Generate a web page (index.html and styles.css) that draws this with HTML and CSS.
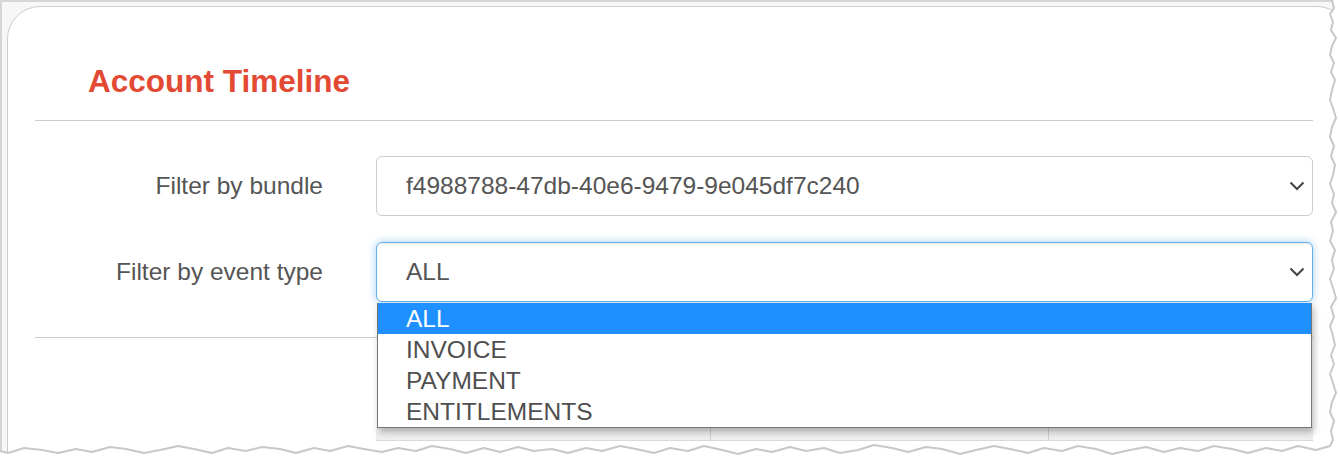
FILE: index.html
```html
<!DOCTYPE html>
<html lang="en">
<head>
<meta charset="utf-8">
<title>Account Timeline</title>
<link rel="stylesheet" href="styles.css">
</head>
<body>
<div class="screen">
  <div class="card">
    <h2 class="title">Account Timeline</h2>
    <hr class="rule">
    <div class="form">
      <div class="row">
        <label class="label">Filter by bundle</label>
        <div class="select">
          <span class="value">f4988788-47db-40e6-9479-9e045df7c240</span>
          <svg class="chev" width="16" height="10" viewBox="0 0 16 10"><polyline points="1.5,1.5 8,8 14.5,1.5" fill="none" stroke="#444" stroke-width="2"/></svg>
        </div>
      </div>
      <div class="row">
        <label class="label">Filter by event type</label>
        <div class="select focus">
          <span class="value">ALL</span>
          <svg class="chev" width="16" height="10" viewBox="0 0 16 10"><polyline points="1.5,1.5 8,8 14.5,1.5" fill="none" stroke="#444" stroke-width="2"/></svg>
          <ul class="dropdown">
            <li class="opt selected">ALL</li>
            <li class="opt">INVOICE</li>
            <li class="opt">PAYMENT</li>
            <li class="opt">ENTITLEMENTS</li>
          </ul>
        </div>
      </div>
    </div>
    <hr class="rule rule2">
    <div class="table">
      <div class="thead">
        <div class="th c1"></div>
        <div class="th c2"></div>
        <div class="th c3"></div>
      </div>
      <div class="tbody"></div>
    </div>
  </div>
</div>
<svg class="tear" width="1340" height="457" viewBox="0 0 1340 457">
  <path class="tear-fill" d="M1340,0 L1332,0 L1334,8 L1330,14 L1333,22 L1331,30 L1336,38 L1332,46 L1330,55 L1334,63 L1331,72 L1335,80 L1332,90 L1330,100 L1333,108 L1336,118 L1332,127 L1330,137 L1334,146 L1331,156 L1335,165 L1333,175 L1330,184 L1334,194 L1332,203 L1336,212 L1331,222 L1333,231 L1330,241 L1335,250 L1332,260 L1334,269 L1330,279 L1333,288 L1336,298 L1331,307 L1334,317 L1330,326 L1333,336 L1335,345 L1331,355 L1334,364 L1330,374 L1333,383 L1336,393 L1332,402 L1330,412 L1334,421 L1331,431 L1333,440 L1330,446 L1316,450 L1298,446 L1282,451 L1266,448 L1248,453 L1232,449 L1214,446 L1198,451 L1180,448 L1164,452 L1146,447 L1130,450 L1112,454 L1096,449 L1078,446 L1062,451 L1044,448 L1028,453 L1010,449 L994,446 L976,450 L960,454 L942,449 L926,447 L908,452 L892,448 L874,445 L858,450 L840,453 L824,448 L806,451 L790,447 L772,452 L756,449 L738,454 L722,450 L704,446 L688,451 L670,448 L654,453 L636,449 L620,446 L602,451 L586,448 L568,453 L552,449 L534,451 L518,447 L500,452 L484,448 L466,453 L450,449 L432,446 L416,451 L398,448 L382,452 L364,449 L348,446 L330,451 L314,448 L296,453 L280,449 L262,447 L246,451 L228,448 L212,453 L194,449 L178,446 L160,450 L144,453 L126,449 L110,447 L92,452 L76,449 L58,453 L42,450 L24,448 L8,453 L0,451 L0,457 L1340,457 Z"/>
  <path class="tear-line" d="M1332,0 L1334,8 L1330,14 L1333,22 L1331,30 L1336,38 L1332,46 L1330,55 L1334,63 L1331,72 L1335,80 L1332,90 L1330,100 L1333,108 L1336,118 L1332,127 L1330,137 L1334,146 L1331,156 L1335,165 L1333,175 L1330,184 L1334,194 L1332,203 L1336,212 L1331,222 L1333,231 L1330,241 L1335,250 L1332,260 L1334,269 L1330,279 L1333,288 L1336,298 L1331,307 L1334,317 L1330,326 L1333,336 L1335,345 L1331,355 L1334,364 L1330,374 L1333,383 L1336,393 L1332,402 L1330,412 L1334,421 L1331,431 L1333,440 L1330,446 L1316,450 L1298,446 L1282,451 L1266,448 L1248,453 L1232,449 L1214,446 L1198,451 L1180,448 L1164,452 L1146,447 L1130,450 L1112,454 L1096,449 L1078,446 L1062,451 L1044,448 L1028,453 L1010,449 L994,446 L976,450 L960,454 L942,449 L926,447 L908,452 L892,448 L874,445 L858,450 L840,453 L824,448 L806,451 L790,447 L772,452 L756,449 L738,454 L722,450 L704,446 L688,451 L670,448 L654,453 L636,449 L620,446 L602,451 L586,448 L568,453 L552,449 L534,451 L518,447 L500,452 L484,448 L466,453 L450,449 L432,446 L416,451 L398,448 L382,452 L364,449 L348,446 L330,451 L314,448 L296,453 L280,449 L262,447 L246,451 L228,448 L212,453 L194,449 L178,446 L160,450 L144,453 L126,449 L110,447 L92,452 L76,449 L58,453 L42,450 L24,448 L8,453 L0,451"/>
</svg>
</body>
</html>
```
FILE: styles.css
```css
html, body {
  margin: 0;
  padding: 0;
  width: 1340px;
  height: 457px;
  overflow: hidden;
  background: #ffffff;
  font-family: "Liberation Sans", Arial, sans-serif;
}

.screen {
  position: relative;
  height: 470px;
  background: #f7f7f7;
  border-top: 2px solid #d6d6d6;
  border-left: 2px solid #d6d6d6;
  overflow: hidden;
}

.card {
  box-sizing: border-box;
  width: 1343px;
  height: 520px;
  margin: 4px 0 0 5px;
  padding: 0 36px 0 27px;
  background: #ffffff;
  border: 1px solid #cccccc;
  border-radius: 33px;
}

.title {
  margin: 0;
  padding: 56px 0 0 53px;
  font-size: 31.5px;
  line-height: 36px;
  font-weight: bold;
  color: #e34a33;
}

.rule {
  margin: 21px 0 0 0;
  border: 0;
  border-top: 1px solid #cccccc;
  height: 0;
}

.rule2 {
  margin-top: 35px;
}

.form {
  margin-top: 35px;
  display: flex;
  flex-direction: column;
  gap: 26px;
}

.row {
  display: flex;
  align-items: center;
}

.label {
  width: 288px;
  flex: none;
  text-align: right;
  font-size: 24.5px;
  color: #555555;
}

.select {
  position: relative;
  box-sizing: border-box;
  flex: 1;
  height: 60px;
  margin-left: 53px;
  padding: 0 7px 0 29px;
  display: flex;
  align-items: center;
  justify-content: space-between;
  border: 1px solid #cccccc;
  border-radius: 6px;
  background: #ffffff;
  font-size: 24.5px;
  color: #555555;
}

.select.focus {
  border-color: #66afe9;
  box-shadow: inset 0 1px 1px rgba(0, 0, 0, 0.075), 0 0 8px rgba(102, 175, 233, 0.6);
}

.chev {
  display: block;
  flex: none;
}

.dropdown {
  position: absolute;
  left: 0;
  right: 0;
  top: calc(100% + 2px);
  margin: 0;
  padding: 0;
  list-style: none;
  background: #ffffff;
  border: 1px solid #777777;
  border-top: 0;
  box-shadow: 2px 4px 7px rgba(0, 0, 0, 0.28);
  z-index: 5;
}

.opt {
  height: 31px;
  line-height: 31px;
  padding-left: 28px;
  font-size: 24.5px;
  color: #4f4f4f;
}

.opt.selected {
  background: #1e90ff;
  color: #ffffff;
}

.table {
  margin: 89px 0 0 341px;
}

.thead {
  display: flex;
  height: 13px;
  background: #efefef;
  border-bottom: 1px solid #d9d9d9;
}

.th {
  box-sizing: border-box;
  border-right: 1px solid #cfcfcf;
}

.c1 { width: 335px; }
.c2 { width: 338px; }
.c3 { flex: 1; border-right: 0; }

.tbody {
  height: 40px;
}

.tear {
  position: absolute;
  left: 0;
  top: 0;
  pointer-events: none;
  z-index: 10;
}

.tear-fill {
  fill: #ffffff;
}

.tear-line {
  fill: none;
  stroke: #c8c8c8;
  stroke-width: 2;
  stroke-linejoin: round;
}
```
